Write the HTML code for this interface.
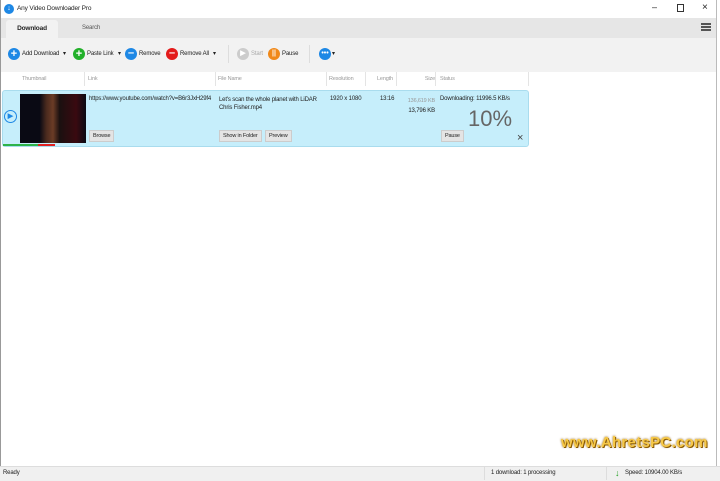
<!DOCTYPE html><html><head><style>
body{margin:0;width:720px;height:480px;background:#fff;font-family:"Liberation Sans",sans-serif;font-size:6px;letter-spacing:-0.15px;color:#222;position:relative;overflow:hidden}
.a{position:absolute;white-space:nowrap}
.c{position:absolute;border-radius:50%;color:#fff;text-align:center;font-weight:bold;letter-spacing:0}
.btn{position:absolute;background:#e4e4e4;border:1px solid #ccc;font-size:5.5px;padding:2px 3px}
.h{position:absolute;top:72px;height:14px;line-height:14px;color:#999;font-size:5.5px;border-right:1px solid #e4e4e4}
</style></head><body>
<div class="a" style="left:0;top:0;width:1px;height:480px;background:#999"></div>
<div class="a" style="right:3px;top:0;width:1px;height:480px;background:#bbb"></div>
<div class="c" style="left:4px;top:4px;width:10px;height:10px;background:#1e88e5;font-size:7px;line-height:10px">↓</div>
<div class="a" style="left:17px;top:5px;font-size:6.5px">Any Video Downloader Pro</div>
<div class="a" style="left:652px;top:2px;font-size:9px">–</div>
<div class="a" style="left:677px;top:4px;width:5px;height:6px;border:1px solid #333"></div>
<div class="a" style="left:702px;top:2px;font-size:10px">×</div>
<div class="a" style="left:1px;top:18px;width:715px;height:20px;background:#e6e6e6"></div>
<div class="a" style="left:6px;top:20px;width:52px;height:18px;background:#f2f2f2;border-radius:3px 3px 0 0;text-align:center;line-height:18px;font-weight:bold;font-size:6.5px">Download</div>
<div class="a" style="left:82px;top:25px;color:#555">Search</div>
<div class="a" style="left:701px;top:23px;width:10px;height:2px;background:#555;box-shadow:0 3px #555,0 6px #555"></div>
<div class="a" style="left:1px;top:38px;width:715px;height:34px;background:#f2f2f2"></div>
<div class="c" style="left:8px;top:48px;width:12px;height:12px;background:#1e88e5;font-size:11px;line-height:12px">+</div>
<div class="a" style="left:22px;top:51px">Add Download</div><div class="a" style="left:63px;top:50px;font-size:6px">▾</div>
<div class="c" style="left:73px;top:48px;width:12px;height:12px;background:#22b02a;font-size:11px;line-height:12px">+</div>
<div class="a" style="left:87px;top:51px">Paste Link</div><div class="a" style="left:118px;top:50px;font-size:6px">▾</div>
<div class="c" style="left:125px;top:48px;width:12px;height:12px;background:#1e88e5;font-size:11px;line-height:11px">–</div>
<div class="a" style="left:139px;top:51px">Remove</div>
<div class="c" style="left:166px;top:48px;width:12px;height:12px;background:#e31b1b;font-size:11px;line-height:11px">–</div>
<div class="a" style="left:180px;top:51px">Remove All</div><div class="a" style="left:213px;top:50px;font-size:6px">▾</div>
<div class="a" style="left:228px;top:45px;width:1px;height:18px;background:#ddd"></div>
<div class="c" style="left:237px;top:48px;width:12px;height:12px;background:#ccc;font-size:7px;line-height:12px">▶</div>
<div class="a" style="left:251px;top:51px;color:#aaa">Start</div>
<div class="c" style="left:268px;top:48px;width:12px;height:12px;background:#f0891a;font-size:7px;line-height:12px">||</div>
<div class="a" style="left:282px;top:51px">Pause</div>
<div class="a" style="left:309px;top:45px;width:1px;height:18px;background:#ddd"></div>
<div class="c" style="left:319px;top:48px;width:12px;height:12px;background:#1e88e5;font-size:7px;line-height:11px">•••</div><div class="a" style="left:332px;top:50px;font-size:6px">▾</div>
<div class="h" style="left:22px;width:62px">Thumbnail</div>
<div class="h" style="left:88px;width:127px">Link</div>
<div class="h" style="left:218px;width:108px">File Name</div>
<div class="h" style="left:329px;width:36px">Resolution</div>
<div class="h" style="left:377px;width:19px">Length</div>
<div class="h" style="left:400px;width:35px;text-align:right">Size</div>
<div class="h" style="left:440px;width:88px">Status</div>
<div class="a" style="left:2px;top:90px;width:525px;height:55px;background:#c6eefb;border:1px solid #a9dcee;border-radius:3px"></div>
<div class="c" style="left:4px;top:110px;width:11px;height:11px;border:1px solid #1e88e5;color:#1e88e5;font-size:7px;line-height:11px">▶</div>
<div class="a" style="left:20px;top:94px;width:66px;height:49px;background:linear-gradient(90deg,#0a0a14 30%,#4a2a1e 40%,#6b3c26 50%,#1a1010 60%,#3a0a10 85%,#0a0a14)"></div>
<div class="a" style="left:3px;top:144px;width:35px;height:2px;background:#2db34a"></div>
<div class="a" style="left:38px;top:144px;width:17px;height:2px;background:#e02020"></div>
<div class="a" style="left:89px;top:96px">https://www.youtube.com/watch?v=B6r3JxH29f4</div>
<div class="a" style="left:219px;top:96px;line-height:8px">Let's scan the whole planet with LiDAR<br>Chris Fisher.mp4</div>
<div class="a" style="left:330px;top:96px">1920 x 1080</div>
<div class="a" style="left:380px;top:96px">13:16</div>
<div class="a" style="left:400px;top:96px;width:35px;text-align:right;color:#999;line-height:10px;font-size:5.5px">136,619 KB<br><span style="color:#222;font-size:6px">13,796 KB</span></div>
<div class="a" style="left:440px;top:96px">Downloading: 11996.5 KB/s</div>
<div class="a" style="left:468px;top:106px;font-size:22px;color:#666;letter-spacing:0">10%</div>
<div class="btn" style="left:89px;top:130px">Browse</div>
<div class="btn" style="left:219px;top:130px">Show in Folder</div>
<div class="btn" style="left:265px;top:130px">Preview</div>
<div class="btn" style="left:441px;top:130px">Pause</div>
<div class="a" style="left:517px;top:132px;font-size:11px;color:#444">×</div>
<div class="a" style="left:561px;top:434px;font-size:15px;font-weight:bold;letter-spacing:0.3px;color:#f7c948;text-shadow:0 0 2px #8a5a00,1px 1px 0 #8a5a00">www.AhretsPC.com</div>
<div class="a" style="left:0;top:466px;width:720px;height:14px;background:#f0f0f0;border-top:1px solid #ddd"></div>
<div class="a" style="left:3px;top:470px">Ready</div>
<div class="a" style="left:484px;top:466px;width:1px;height:14px;background:#ddd"></div>
<div class="a" style="left:491px;top:470px">1 download: 1 processing</div>
<div class="a" style="left:606px;top:466px;width:1px;height:14px;background:#ddd"></div>
<div class="a" style="left:615px;top:468px;color:#22a022;font-size:9px;font-weight:bold">↓</div>
<div class="a" style="left:625px;top:470px">Speed: 10904.00 KB/s</div>
</body></html>
